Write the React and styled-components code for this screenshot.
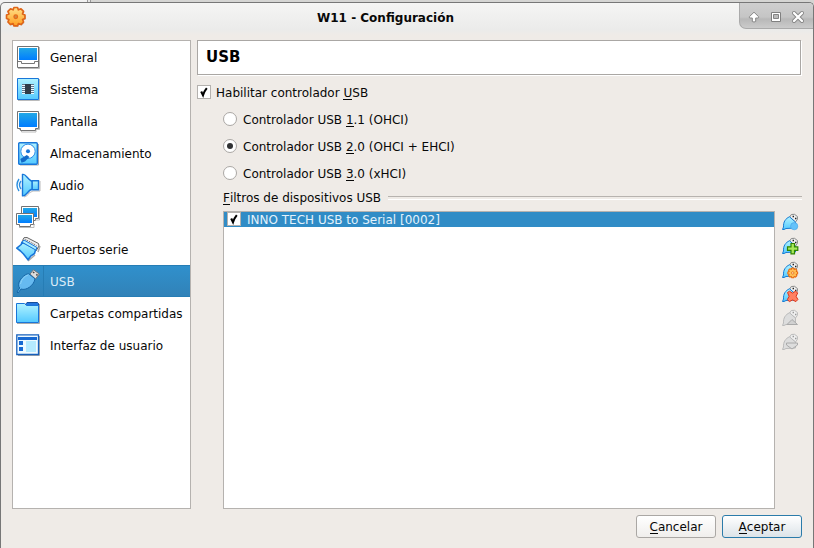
import React from 'react';
import styled, { createGlobalStyle, css } from 'styled-components';

const Global = createGlobalStyle`
  * { box-sizing: border-box; }
  body { margin: 0; background: #d9d9d7; overflow: hidden; }
  body, button { font-family: "DejaVu Sans", sans-serif; font-size: 12px; color: #080808; }
`;
const Desktop = styled.div`
  width: 814px; height: 548px; padding-top: 2px; overflow: hidden;
  background: linear-gradient(90deg, #f1f1f1 87px, #999 87px 88px, #e6e6e6 88px 90px, #999 90px 91px, #d5d5d3 91px);
`;
const Window = styled.div`
  height: 546px; border: 1px solid #777; border-bottom: 0; border-radius: 5px 5px 0 0;
  background: linear-gradient(#f5f5f4 0, #ebebea 27px, #efebe7 32px); overflow: hidden;
`;
const TitleBar = styled.header`
  display: grid; grid-template-columns: 75px 1fr 74px; height: 37px;
`;
const Logo = styled.svg`width: 24px; height: 24px; margin: 2px 0 0 3px;`;
const Title = styled.h1`
  margin: 0; padding: 7px 44px 0 0; text-align: center; font-size: 12px; line-height: 16px; font-weight: bold;
`;
const WindowControls = styled.div`
  height: 26px; padding: 6px 7px 0 6px; display: flex; gap: 6px;
  border: solid #aaa; border-width: 0 0 1px 1px; border-bottom-left-radius: 7px;
  background: linear-gradient(#cfcfcf, #c5c5c5 14px, #b8b8b8 16px, #cbcbcb);
`;
const Control = styled.button`
  border: 0; background: none; padding: 0; width: 16px; height: 16px;
  svg { display: block; }
`;
const Body = styled.div`display: flex; height: 469px; padding-left: 11px; gap: 6px;`;
const Sidebar = styled.nav`
  width: 179px; height: 469px; border: 1px solid #b5b2af; background: #fff; flex: none;
`;
const NavItem = styled.div`
  display: flex; align-items: center; height: 32px; padding-left: 3px; gap: 10px; line-height: 16px; white-space: nowrap;
  svg { width: 24px; height: 24px; flex: none; overflow: visible; }
  ${p => p.$active && css`
    color: #dcecf7; border: solid #267db5; border-width: 1px 0;
    background: linear-gradient(90deg, transparent 30px, #267db5 30px 31px, transparent 31px), linear-gradient(#3090cc, #3182b8);
  `}
`;
const NavLabel = styled.span`padding-top: 2px;`;
const Page = styled.main`width: 605px; height: 469px; display: flex; flex-direction: column;`;
const Heading = styled.h2`
  margin: 0; width: 604px; height: 35px; padding-left: 8px; border: 1px solid #aaa7a4; box-shadow: 1px 1px #fff;
  background: #fff; color: #000; font-size: 15px; line-height: 33px; flex: none;
`;
const Choice = styled.label`
  display: flex; align-items: center; gap: ${p => p.$gap}px; height: 16px; line-height: 16px;
`;
const ChoiceText = styled.span`padding-top: 2px;`;
const Enable = styled(Choice)`margin-top: 9px;`;
const Controllers = styled.div`display: grid; gap: 11px; margin: 11px 0 0 26px;`;
const Box = styled.span`
  width: 14px; height: 14px; border: 1px solid #b4b1ae; background: #fff; flex: none;
  svg { display: block; }
`;
const Radio = styled.span`
  display: grid; place-items: center; width: 14px; height: 14px; border-radius: 50%;
  border: 1px solid #aaa7a4; background: #fff;
  &::after { content: ""; width: 6px; height: 6px; border-radius: 50%; background: ${p => p.$on ? '#303234' : 'transparent'}; }
`;
const Key = styled.span`
  background: linear-gradient(currentColor, currentColor) 0 100% / 100% 1px no-repeat;
  display: inline-block; height: 15px; line-height: 16px; vertical-align: top;
`;
const GroupTitle = styled.div`
  display: flex; gap: 7px; margin: 9px 0 0 26px; line-height: 16px; height: 16px; white-space: nowrap;
  &::after { content: ""; flex: 1; height: 2px; margin-top: 6px; border-top: 1px solid #b7b3af; border-bottom: 1px solid #fff; }
`;
const Filters = styled.div`display: flex; gap: 7px; margin: 5px 0 0 26px; height: 299px;`;
const FilterList = styled.div`
  width: 552px; height: 298px; border: 1px solid #b5b2af; background: #fff;
`;
const Filter = styled.div`
  display: flex; align-items: flex-start; height: 15px; padding-left: 3px; gap: 6px; background: #308cc6; color: #e3f2fb;
  line-height: 16px;
`;
const Tools = styled.div`
  display: grid; grid-auto-rows: 16px; gap: 8px; padding-top: 3px; align-content: start;
  svg { width: 16px; height: 16px; display: block; overflow: visible; }
`;
const Footer = styled.footer`display: flex; justify-content: flex-end; gap: 6px; padding: 6px 11px 0 0;`;
const DialogButton = styled.button`
  width: 80px; height: 23px; padding: 1px 0 0; border: 1px solid ${p => p.$primary ? '#2b7baa' : '#aaa7a4'}; border-radius: 3px;
  background: linear-gradient(#fff, ${p => p.$primary ? '#dce3e8' : '#f0eeec'}); line-height: 17px;
`;

const Check = () => <svg width="12" height="12" viewBox="0 0 12 12"><path d="M3.2 5.5 5 9.2Q6.3 5 8.8 2.1" fill="none" stroke="#000" strokeWidth="2.1" /></svg>;
const Gradients = () => (
  <svg width="0" height="0" aria-hidden="true" display="block"><defs>
    <linearGradient id="screen" x2="0" y2="1"><stop stopColor="#22a8e6" /><stop offset="1" stopColor="#007dff" /></linearGradient>
    <linearGradient id="sky" x2="0" y2="1"><stop stopColor="#b2f3ff" /><stop offset="1" stopColor="#53c9ff" /></linearGradient>
    <linearGradient id="gold" x2="0" y2="1"><stop stopColor="#ffe08a" /><stop offset="1" stopColor="#ff9e20" /></linearGradient>
  </defs></svg>
);
const NavIcon = ({ name }) => {
  const line = { stroke: '#1976d9', strokeWidth: 1.4, fill: 'url(#sky)' };
  const pics = {
    general: <><path d="M2 23.5H23.5V2" fill="none" stroke="#bbb" /><path d="M1.5 1.5h21v21h-21z" fill="#fff" stroke="#737373" /><path d="M3 3h18v12H3z" fill="url(#screen)" /><path d="M2 16.5h3.5v2h13v-2H22" fill="none" stroke="#777" /></>,
    system: <><path d="M2 23.5H23.5V2" fill="none" stroke="#bbb" /><path d="M1.5 1.5h21v21h-21z" {...line} strokeWidth="1" /><path d="M6 7.5h12M6 9.5h12M6 11.5h12M6 13.5h12M6 15.5h12" stroke="#607890" /><path d="M6 8.5h12M6 10.5h12M6 12.5h12M6 14.5h12M6 16.5h12" stroke="#edfaff" /><path d="M9 7h6v10H9z" fill="#303c48" /></>,
    display: <><path d="M3 20.5H5.5v2.5H20v-2.5h3.5V4" fill="none" stroke="#bbb" /><path d="M1.5 2.5h21v17h-3v2h-15v-2h-3z" fill="#fff" stroke="#737373" /><path d="M3 4h18v14H3z" fill="url(#screen)" /></>,
    disk: <><path d="M4 24H22.5V3" fill="none" stroke="#aaa" /><rect x="2.7" y="1.7" width="18.6" height="21.6" rx="1" {...line} /><circle cx="12" cy="10.3" r="7.2" fill="#fff" stroke="#2689e8" /><circle cx="12" cy="10.3" r="2" fill="#1976d9" /><path d="M10.8 14 13.4 16 9 20.5 5.5 21.8 4.3 18z" fill="#126ac8" /></>,
    audio: <><path d="M3 6Q-1 12 3 18M5 8Q2 12 5 16" fill="none" stroke="#3091df" strokeWidth="1.4" /><path d="M8 24Q12 23 13 20L17 18h7V8" fill="none" stroke="#bbb" /><path d="M16 7.7h6.5v9H16z" {...line} /><path d="M6.5 1.5C9.5 0 11 6 16 8.5V16C11 18 10 24 6.5 22.8z" {...line} /></>,
    network: <><path d="M5.5 1.5h17v12h-3v2h-10v-2h-4z" fill="#fff" stroke="#737373" /><path d="M7 3h14v9H7z" fill="url(#screen)" /><path d="M23.5 3v12h-4M3 22.5h15v-3h1" fill="none" stroke="#bbb" /><path d="M.5 8.5h17v11h-3v2h-11v-2h-3z" fill="#fff" stroke="#737373" /><path d="M2 10h14v8H2z" fill="url(#screen)" /></>,
    serial: <><path d="M12 24 19 18M22 15 24 9" fill="none" stroke="#aaa" strokeWidth="1.5" /><path d="M6.5 3.5 8 .7 11 .5 22.5 6.5 23 9 20 14z" fill="#eee" stroke="#666" /><path d="M9.5 2.5 20.5 8.5" stroke="#555" strokeDasharray="1 1" /><path d="M6 5 5.2 7.5.8 11.2 4.5 14 7.5 17 12 22.8 15 18.8 18.5 16.5 19.8 12z" {...line} strokeWidth="1.6" strokeLinejoin="round" /><path d="M8 3 21 10.5 19.7 13 6 5.2z" fill="#a9ecff" stroke="#1976d9" /></>,
    usb: <><path d="M14 5 17.5.8 23.3 5 19.5 10z" fill="#ddd" stroke="#777" /><path d="M17 3l1.3 1M20.3 5.3l1.2 1" stroke="#444" strokeWidth="1.5" /><path d="M1 23 3.7 19C0 15 6 6 12.5 4.6L19 9.8C18 16.5 10 22 5 20L2 24z" fill="#66baf0" stroke="#1767a7" /><path d="M4.5 15Q6 8 12 6" fill="none" stroke="#8bd2f7" /></>,
    folder: <><path d="M1 22.5H23.5V3" fill="none" stroke="#aaa" /><path d="M9 4 11 1.5H21.5l1 1V7H9z" fill="#2477df" stroke="#174f99" /><path d="M.5 2.5H8.5l2 2H22.5v17H.5z" {...line} strokeWidth="1" /></>,
    ui: <><path d="M2 22.5H23.5V3" fill="none" stroke="#aaa" /><path d="M.8 1.8h21.7v19.7H.8z" fill="#eefaff" stroke="#1760bc" strokeWidth="1.3" /><path d="M2 4h19v3H2zM3 8h4v4H3zM3 14h4v4H3z" fill="#1769d2" /><path d="M10 8h10v11H10z" fill="#b5eaff" /></>,
  };
  return <svg viewBox="0 0 24 24">{pics[name]}</svg>;
};
const gear = 'M6.6.8h2.8l.7 1.8 2-.8 2 2-.8 2 1.9.8v2.8l-1.9.7.8 2-2 2-2-.8-.7 1.9H6.6l-.7-1.9-2 .8-2-2 .8-2L.8 9.4V6.6l1.9-.8-.8-2 2-2 2 .8z';
const ToolIcon = ({ type }) => {
  const off = type === 'up' || type === 'down';
  return <svg viewBox="0 0 16 16">
    <path d="M7.5 3.3 9.3.5 12.5.3 15.5 2.6 15.3 5.5 13.5 8z" fill={off ? '#efefef' : '#eee'} stroke={off ? '#bbb' : '#888'} />
    <path d="M10.6 2.5H12M13 4.5h1.4" stroke={off ? '#999' : '#222'} strokeWidth="1.4" />
    <path d="M.5 15.5 1.5 13C1.2 8 3.5 4.5 7.5 2.8L13.5 8V14L4 14.5 2 15.5z" fill={off ? '#ddd' : 'url(#sky)'} stroke={off ? '#bbb' : '#167bd4'} />
    {type === 'new' && <circle cx="12.2" cy="12.2" r="3.6" fill="#63c2fa" stroke="#4aa8e7" strokeWidth=".7" />}
    {type === 'add' && <path d="M9 5.5h3.5v3.3h3.3v3.5h-3.3v3.5H9v-3.5H5.5V8.8H9z" fill="#a8e85b" stroke="#308500" strokeWidth="1.2" />}
    {type === 'edit' && <g transform="translate(5.3 5.5) scale(.68)"><path d={gear} fill="#ffbe55" stroke="#e9660a" strokeWidth="1.5" /><circle cx="8" cy="8" r="1.8" fill="#ffe8bc" stroke="#e15b00" /></g>}
    {type === 'remove' && <path d="m5.5 6.5 2-1.3 3 1.9 3-1.9 2.2 1.7-1.6 3.4 1.8 3.2-2 2.1-3.4-1.7-3 1.7-2.2-1.9 1.8-3.4z" fill="#ff8062" stroke="#dc351b" />}
    {type === 'up' && <path d="m5 14.5 5-5 5.5 5z" fill="#d1d1d1" stroke="#aaa" />}
    {type === 'down' && <path d="M4.5 9h11v2L10 15l-5.5-4z" fill="#ddd" stroke="#aaa" />}
  </svg>;
};
const items = [
  ['general', 'General'], ['system', 'Sistema'], ['display', 'Pantalla'], ['disk', 'Almacenamiento'], ['audio', 'Audio'],
  ['network', 'Red'], ['serial', 'Puertos serie'], ['usb', 'USB'], ['folder', 'Carpetas compartidas'], ['ui', 'Interfaz de usuario'],
];
const controllers = [['1', '.1 (OHCI)'], ['2', '.0 (OHCI + EHCI)'], ['3', '.0 (xHCI)']];

export default function App() {
  return <Desktop>
    <Global />
    <Window>
      <TitleBar>
        <Logo viewBox="0 0 24 24"><g transform="translate(1.5 1.5) scale(1.28)"><path d={gear} transform="translate(.6 .7)" fill="#aaa" opacity=".7" /><path d={gear} fill="url(#gold)" stroke="#df6518" strokeWidth="1.3" strokeLinejoin="round" /><circle cx="8" cy="8" r="1.4" fill="#c98b4b" stroke="#e66b18" /></g></Logo>
        <Title>W11 - Configuración</Title>
        <WindowControls>
          <Control aria-label="Enrollar"><svg width="16" height="16"><path d="m8 3.2 4.7 4.6q.3 1.2-.8 1.2h-2.2v3.5q-1.7 1-3.4 0V9H4.1q-1.1 0-.8-1.2z" fill="#fff" stroke="#858585" strokeLinejoin="round" /></svg></Control>
          <Control aria-label="Maximizar"><svg width="16" height="16"><path d="M3.5 3.5h9v9h-9z" fill="#fff" stroke="#808080" /><path d="M5.5 5.5h5v4h-5z" fill="#bbb" stroke="#858585" /></svg></Control>
          <Control aria-label="Cerrar"><svg width="16" height="16"><path d="m4 4 8 8m0-8-8 8" stroke="#858585" strokeWidth="4" strokeLinecap="round" /><path d="m4 4 8 8m0-8-8 8" stroke="#fff" strokeWidth="2.3" strokeLinecap="round" /></svg></Control>
        </WindowControls>
      </TitleBar>
      <Body>
        <Sidebar>{items.map(([icon, label]) => <NavItem key={icon} $active={icon === 'usb'}><NavIcon name={icon} /><NavLabel>{label}</NavLabel></NavItem>)}</Sidebar>
        <Page>
          <Heading>USB</Heading>
          <Enable $gap={5}><Box><Check /></Box><ChoiceText>Habilitar controlador <Key>U</Key>SB</ChoiceText></Enable>
          <Controllers>{controllers.map(([n, rest]) => <Choice key={n} $gap={6}><Radio $on={n === '2'} /><ChoiceText>Controlador USB <Key>{n}</Key>{rest}</ChoiceText></Choice>)}</Controllers>
          <GroupTitle><span><Key>F</Key>iltros de dispositivos USB</span></GroupTitle>
          <Filters>
            <FilterList><Filter><Box><Check /></Box>INNO TECH USB to Serial [0002]</Filter></FilterList>
            <Tools>{['new', 'add', 'edit', 'remove', 'up', 'down'].map(t => <ToolIcon key={t} type={t} />)}</Tools>
          </Filters>
        </Page>
      </Body>
      <Footer>
        <DialogButton><Key>C</Key>ancelar</DialogButton>
        <DialogButton $primary><Key>A</Key>ceptar</DialogButton>
      </Footer>
    </Window>
    <Gradients />
  </Desktop>;
}
